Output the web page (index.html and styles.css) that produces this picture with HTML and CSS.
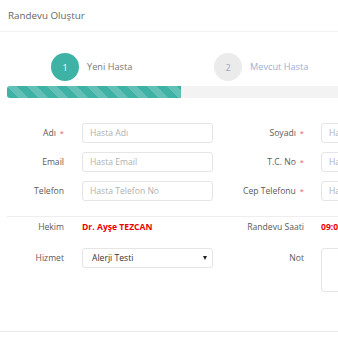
FILE: index.html
```html
<!DOCTYPE html>
<html lang="tr">
<head>
<meta charset="utf-8">
<title>Randevu Oluştur</title>
<link rel="stylesheet" href="styles.css">
</head>
<body>
<div class="page">
  <div class="header"><h1 class="title">Randevu Oluştur</h1></div>

  <div class="steps">
    <div class="step active"><span class="circle">1</span><span class="step-label">Yeni Hasta</span></div>
    <div class="step"><span class="circle">2</span><span class="step-label">Mevcut Hasta</span></div>
  </div>

  <div class="progress"><div class="bar" style="width:174px"></div></div>

  <div class="grid fields">
    <label class="lbl">Adı<span class="req">*</span></label>
    <input class="ctl" placeholder="Hasta Adı">
    <label class="lbl lbl-r">Soyadı<span class="req">*</span></label>
    <input class="ctl" placeholder="Hasta Soyadı">

    <label class="lbl">Email</label>
    <input class="ctl" placeholder="Hasta Email">
    <label class="lbl lbl-r">T.C. No<span class="req">*</span></label>
    <input class="ctl" placeholder="Hasta T.C. No">

    <label class="lbl">Telefon</label>
    <input class="ctl" placeholder="Hasta Telefon No">
    <label class="lbl lbl-r">Cep Telefonu<span class="req">*</span></label>
    <input class="ctl" placeholder="Hasta Cep Telefonu">
  </div>

  <div class="sep"></div>

  <div class="grid info">
    <span class="lbl">Hekim</span>
    <span class="val">Dr. Ayşe TEZCAN</span>
    <span class="lbl lbl-r">Randevu Saati</span>
    <span class="val">09:00</span>
  </div>

  <div class="grid extra">
    <span class="lbl">Hizmet</span>
    <div class="select"><span>Alerji Testi</span><span class="caret"></span></div>
    <span class="lbl lbl-r">Not</span>
    <div class="textarea"></div>
  </div>

  <div class="footer-line"></div>
</div>
</body>
</html>
```
FILE: styles.css
```css
html, body {
  margin: 0;
  padding: 0;
  background: #fff;
  overflow: hidden;
}
body {
  font-family: "Open Sans", "Liberation Sans", sans-serif;
  color: #555;
  width: 338px;
  height: 338px;
}
.page {
  width: 338px;
}
.header {
  height: 31px;
  display: flex;
  align-items: center;
  padding-left: 8px;
  border-bottom: 1px solid #f2f2f2;
}
.title {
  margin: 0;
  font-size: 9.8px;
  font-weight: 400;
  color: #666;
}
.steps {
  display: flex;
  padding-left: 51px;
  margin-top: 21px;
}
.step {
  width: 163px;
  flex: none;
  display: flex;
  align-items: center;
  gap: 8px;
}
.circle {
  width: 28px;
  height: 28px;
  border-radius: 50%;
  background: #ebebeb;
  color: #9aa6c0;
  display: flex;
  align-items: center;
  justify-content: center;
  font-size: 9px;
}
.step-label {
  font-size: 9.2px;
  color: #9ab0d8;
  white-space: nowrap;
  margin-top: -1px;
}
.step.active .circle {
  background: #3fb2a6;
  color: #fff;
}
.step.active .step-label {
  color: #777;
}
.progress {
  margin: 5px 0 0 7px;
  height: 12px;
  background: #f3f3f3;
  border-radius: 3px 0 0 3px;
  overflow: hidden;
}
.bar {
  height: 100%;
  background-color: #3fb2a6;
  background-image: linear-gradient(45deg, rgba(255,255,255,.18) 25%, transparent 25%, transparent 50%, rgba(255,255,255,.18) 50%, rgba(255,255,255,.18) 75%, transparent 75%, transparent);
  background-size: 20px 20px;
}
.grid {
  display: grid;
  grid-template-columns: 82px 131px 108px 131px;
  width: 452px;
}
.fields {
  margin-top: 25px;
  row-gap: 9px;
}
.lbl {
  font-size: 8.6px;
  color: #5a5a5a;
  text-align: right;
  padding-right: 18px;
  line-height: 20px;
  white-space: nowrap;
}
.lbl-r {
  padding-right: 17px;
}
.req {
  color: #e9636b;
  margin-left: 4px;
  font-size: 7.5px;
}
.ctl {
  box-sizing: border-box;
  height: 20px;
  width: 131px;
  margin: 0;
  border: 1px solid #e5e5e5;
  border-radius: 3px;
  padding: 0 7px;
  font-family: inherit;
  font-size: 8.6px;
  color: #333;
  background: #fff;
  outline: none;
}
.ctl::placeholder {
  color: #b0b0b0;
}
.sep {
  margin: 15px 0 0 7px;
  border-top: 1px solid #eeeeee;
}
.info {
  margin-top: 1px;
}
.info .lbl,
.info .val {
  line-height: 18px;
}
.val {
  font-size: 8.6px;
  font-weight: 700;
  color: #f00000;
  white-space: nowrap;
}
.extra {
  margin-top: 12px;
  align-items: start;
}
.select {
  box-sizing: border-box;
  height: 20px;
  border: 1px solid #e5e5e5;
  border-radius: 3px;
  padding: 0 5px 0 9px;
  display: flex;
  align-items: center;
  justify-content: space-between;
  font-size: 8.6px;
  color: #333;
}
.caret {
  width: 0;
  height: 0;
  border-left: 2.5px solid transparent;
  border-right: 2.5px solid transparent;
  border-top: 4px solid #222;
}
.textarea {
  box-sizing: border-box;
  height: 44px;
  border: 1px solid #e5e5e5;
  border-radius: 3px;
}
.footer-line {
  margin-top: 39px;
  border-top: 1px solid #eaeaea;
}
```
